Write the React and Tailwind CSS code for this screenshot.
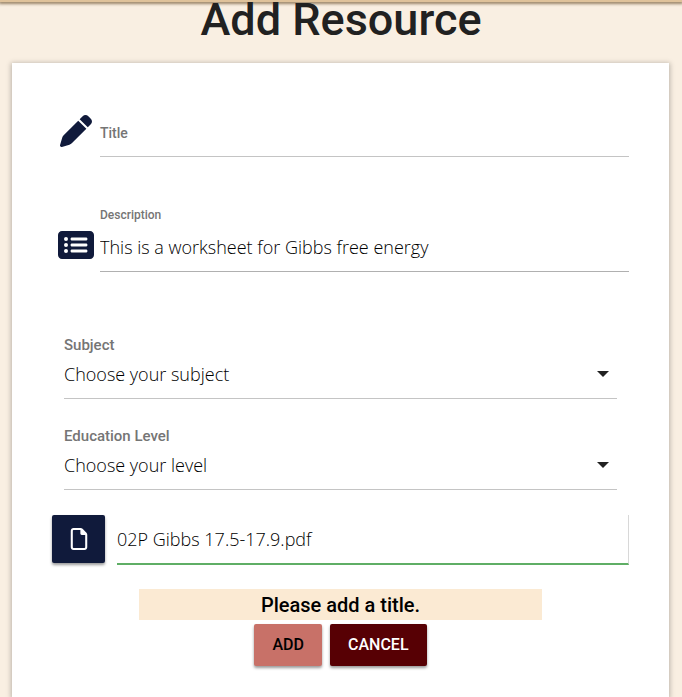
import { FaPen, FaRectangleList, FaRegFile } from "react-icons/fa6";

const fieldText =
  "font-['Open_Sans','Noto_Sans',sans-serif] font-light text-lg text-black";

function SelectField({ id, label, placeholder, options }) {
  return (
    <div className="px-3">
      <label
        htmlFor={id}
        className="block text-[15px] leading-4 font-medium text-[#757575]"
      >
        {label}
      </label>
      <div className="grid">
        <select
          id={id}
          defaultValue=""
          className={`col-start-1 row-start-1 h-[46px] w-full appearance-none border-b border-[#c4c4c4] bg-transparent pb-1 outline-none ${fieldText}`}
        >
          <option value="">{placeholder}</option>
          {options.map((option) => (
            <option key={option}>{option}</option>
          ))}
        </select>
        <svg
          viewBox="0 0 12 6"
          className="pointer-events-none col-start-1 row-start-1 mr-2 mb-1 h-1.5 w-3 self-center justify-self-end fill-[#212121]"
          aria-hidden="true"
        >
          <path d="M0 0h12L6 6z" />
        </svg>
      </div>
    </div>
  );
}

export default function App() {
  return (
    <div className="flex min-h-screen flex-col bg-[#f9efe2] font-[Roboto,sans-serif]">
      <header className="h-0.5 bg-[#dfc29a] shadow-[0_1px_3px_1px_rgba(90,60,20,0.6)]" />
      <h1 className="h-[61px] text-center text-[45px] leading-[35px] font-medium text-[#212121]">
        Add Resource
      </h1>
      <main className="mr-[13px] ml-3 flex-1 bg-white px-10 pt-[46px] shadow-[0_1px_5px_1px_rgba(0,0,0,0.25)]">
        <form onSubmit={(event) => event.preventDefault()}>
          <div className="flex">
            <span className="flex w-12 justify-center pt-1.5 text-[#101a3b]">
              <FaPen size={32} />
            </span>
            <div className="grid flex-1">
              <input
                id="title"
                type="text"
                className={`col-start-1 row-start-1 h-12 w-full border-b border-[#c4c4c4] bg-transparent outline-none ${fieldText}`}
              />
              <label
                htmlFor="title"
                className="col-start-1 row-start-1 self-center justify-self-start text-sm leading-4 font-medium text-[#757575]"
              >
                Title
              </label>
            </div>
          </div>

          <div className="mt-[49px] flex items-end">
            <span className="flex h-[43px] w-12 justify-center text-[#101a3b]">
              <FaRectangleList className="h-8 w-9" />
            </span>
            <div className="flex-1">
              <label
                htmlFor="description"
                className="block text-xs leading-[18px] font-medium text-[#757575]"
              >
                Description
              </label>
              <input
                id="description"
                type="text"
                defaultValue="This is a worksheet for Gibbs free energy"
                className={`block h-12 w-full border-b border-[#b0b0b0] bg-transparent pb-0.5 outline-none ${fieldText}`}
              />
            </div>
          </div>

          <div className="mt-[65px] flex flex-col gap-[29px]">
            <SelectField
              id="subject"
              label="Subject"
              placeholder="Choose your subject"
              options={["Chemistry", "Physics", "Biology", "Mathematics"]}
            />
            <SelectField
              id="level"
              label="Education Level"
              placeholder="Choose your level"
              options={["High School", "Undergraduate", "Graduate"]}
            />
          </div>

          <div className="mt-[25px] flex gap-3">
            <button
              type="button"
              aria-label="Choose file"
              className="flex h-12 w-[53px] items-center justify-center rounded-xs bg-[#101a3b] text-white shadow-[0_2px_3px_rgba(0,0,0,0.4)]"
            >
              <FaRegFile size={22} />
            </button>
            <input
              type="text"
              aria-label="File name"
              defaultValue="02P Gibbs 17.5-17.9.pdf"
              className={`h-[50px] min-w-0 flex-1 border-r border-b-2 border-r-[#d8d8d8] border-b-[#5fae65] bg-transparent outline-none ${fieldText}`}
            />
          </div>

          <p
            role="alert"
            className="mx-auto mt-6 w-[70%] bg-[#fbead3] pt-px text-center text-xl leading-[30px] font-medium text-black"
          >
            Please add a title.
          </p>
          <div className="mt-1 flex justify-center gap-2">
            <button
              type="submit"
              className="h-[42px] rounded-xs bg-[#c87168] px-[18px] text-base font-medium text-black shadow-[0_2px_3px_rgba(0,0,0,0.4)]"
            >
              ADD
            </button>
            <button
              type="button"
              className="h-[42px] rounded-xs bg-[#570004] px-[18px] text-base font-medium text-white shadow-[0_2px_3px_rgba(0,0,0,0.4)]"
            >
              CANCEL
            </button>
          </div>
        </form>
      </main>
    </div>
  );
}
